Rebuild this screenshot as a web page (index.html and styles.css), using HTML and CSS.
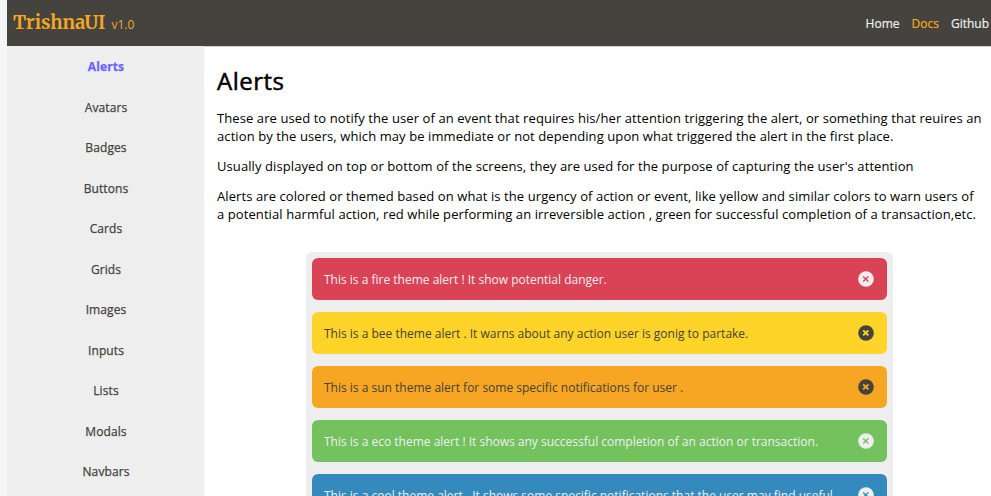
FILE: index.html
```html
<!DOCTYPE html>
<html lang="en">
<head>
<meta charset="utf-8">
<title>TrishnaUI - Alerts</title>
<link rel="stylesheet" href="styles.css">
</head>
<body>
<svg class="symbols" width="0" height="0" aria-hidden="true">
  <symbol id="close" viewBox="0 0 16 16"><circle cx="8" cy="8" r="7.8" fill="currentColor"/><path d="M5.2 5.4l5.2 5M10.4 5.4l-5.2 5" fill="none" stroke="var(--theme)" stroke-width="var(--cross, 1.4)"/></symbol>
</svg>
<header class="navbar">
  <div class="brand"><span class="brand-name">TrishnaUI</span><span class="version">v1.0</span></div>
  <nav class="nav-links"><a>Home</a><a class="current">Docs</a><a>Github</a></nav>
</header>
<div class="layout">
  <aside class="sidebar">
    <a class="active">Alerts</a><a>Avatars</a><a>Badges</a><a>Buttons</a><a>Cards</a><a>Grids</a><a>Images</a><a>Inputs</a><a>Lists</a><a>Modals</a><a>Navbars</a>
  </aside>
  <main class="content">
    <h1>Alerts</h1>
    <p>These are used to notify the user of an event that requires his/her attention triggering the alert, or something that reuires an<br>action by the users, which may be immediate or not depending upon what triggered the alert in the first place.</p>
    <p>Usually displayed on top or bottom of the screens, they are used for the purpose of capturing the user's attention</p>
    <p>Alerts are colored or themed based on what is the urgency of action or event, like yellow and similar colors to warn users of<br>a potential harmful action, red while performing an irreversible action , green for successful completion of a transaction,etc.</p>
    <section class="demo">
      <div class="alert fire"><span>This is a fire theme alert ! It show potential danger.</span><svg class="close"><use href="#close"/></svg></div>
      <div class="alert bee"><span>This is a bee theme alert . It warns about any action user is gonig to partake.</span><svg class="close"><use href="#close"/></svg></div>
      <div class="alert sun"><span>This is a sun theme alert for some specific notifications for user .</span><svg class="close"><use href="#close"/></svg></div>
      <div class="alert eco"><span>This is a eco theme alert ! It shows any successful completion of an action or transaction.</span><svg class="close"><use href="#close"/></svg></div>
      <div class="alert cool"><span>This is a cool theme alert . It shows some specific notifications that the user may find useful.</span><svg class="close"><use href="#close"/></svg></div>
    </section>
  </main>
</div>
</body>
</html>
```
FILE: styles.css
```css
* { box-sizing: border-box; }
html { background: #f4f6f6; }
body {
  margin: 0 0 0 7px;
  height: 496px;
  overflow: hidden;
  background: #fff;
  font-family: "Open Sans", sans-serif;
  font-size: 13px;
  color: #000;
}
.symbols { position: absolute; }
.navbar {
  display: flex;
  justify-content: space-between;
  align-items: center;
  height: 46px;
  padding: 0 2px 0 6px;
  background: #45433d;
  box-shadow: 0 1px 0 #d0d0cf;
}
.brand { display: flex; align-items: baseline; gap: 6px; color: #f5a623; }
.brand-name { font: bold 18.4px/24px "Merriweather", "DejaVu Serif", serif; }
.version { font-size: 12px; }
.nav-links { display: flex; gap: 12px; color: #eee; font-size: 12px; -webkit-text-stroke: .2px currentColor; }
.nav-links .current { color: #f5a623; }
.layout { display: flex; height: 450px; }
.sidebar {
  flex: 0 0 197px;
  display: flex;
  flex-direction: column;
  padding: 1px 0 0 1px;
  overflow: hidden;
  background: #eee;
  color: #45433d;
  font-size: 12px;
  text-align: center;
  line-height: 40.5px;
  letter-spacing: .1px;
  -webkit-text-stroke: .25px currentColor;
}
.sidebar a { height: 40.5px; flex-shrink: 0; }
.sidebar .active { color: #6c63ff; font-weight: 700; }
.content { flex: 1; min-width: 0; padding: 17px 10px 0 13px; overflow: hidden; }
h1 { margin: 0; font-size: 24px; font-weight: 400; line-height: 36px; letter-spacing: .5px; -webkit-text-stroke: .5px currentColor; }
p { margin: 0 0 12px; line-height: 18px; white-space: nowrap; letter-spacing: .088px; }
h1 + p { margin-top: 10px; }
.demo {
  width: 587px;
  margin: 29px 0 0 89px;
  padding: 6px;
  background: #eee;
  border-radius: 6px;
}
.alert {
  display: flex;
  align-items: center;
  justify-content: space-between;
  height: 42px;
  margin-bottom: 12px;
  padding: 0 13px 0 12px;
  border-radius: 6px;
  background: var(--theme);
  color: #eee;
  font-size: 12px;
  white-space: nowrap;
}
.close { width: 16px; height: 16px; flex-shrink: 0; }
.fire { --theme: #da4255; }
.bee { --theme: #ffd428; }
.sun { --theme: #f6a623; }
.eco { --theme: #73c25e; }
.cool { --theme: #358abd; }
.bee, .sun { color: #45433d; --cross: 2; }
```
